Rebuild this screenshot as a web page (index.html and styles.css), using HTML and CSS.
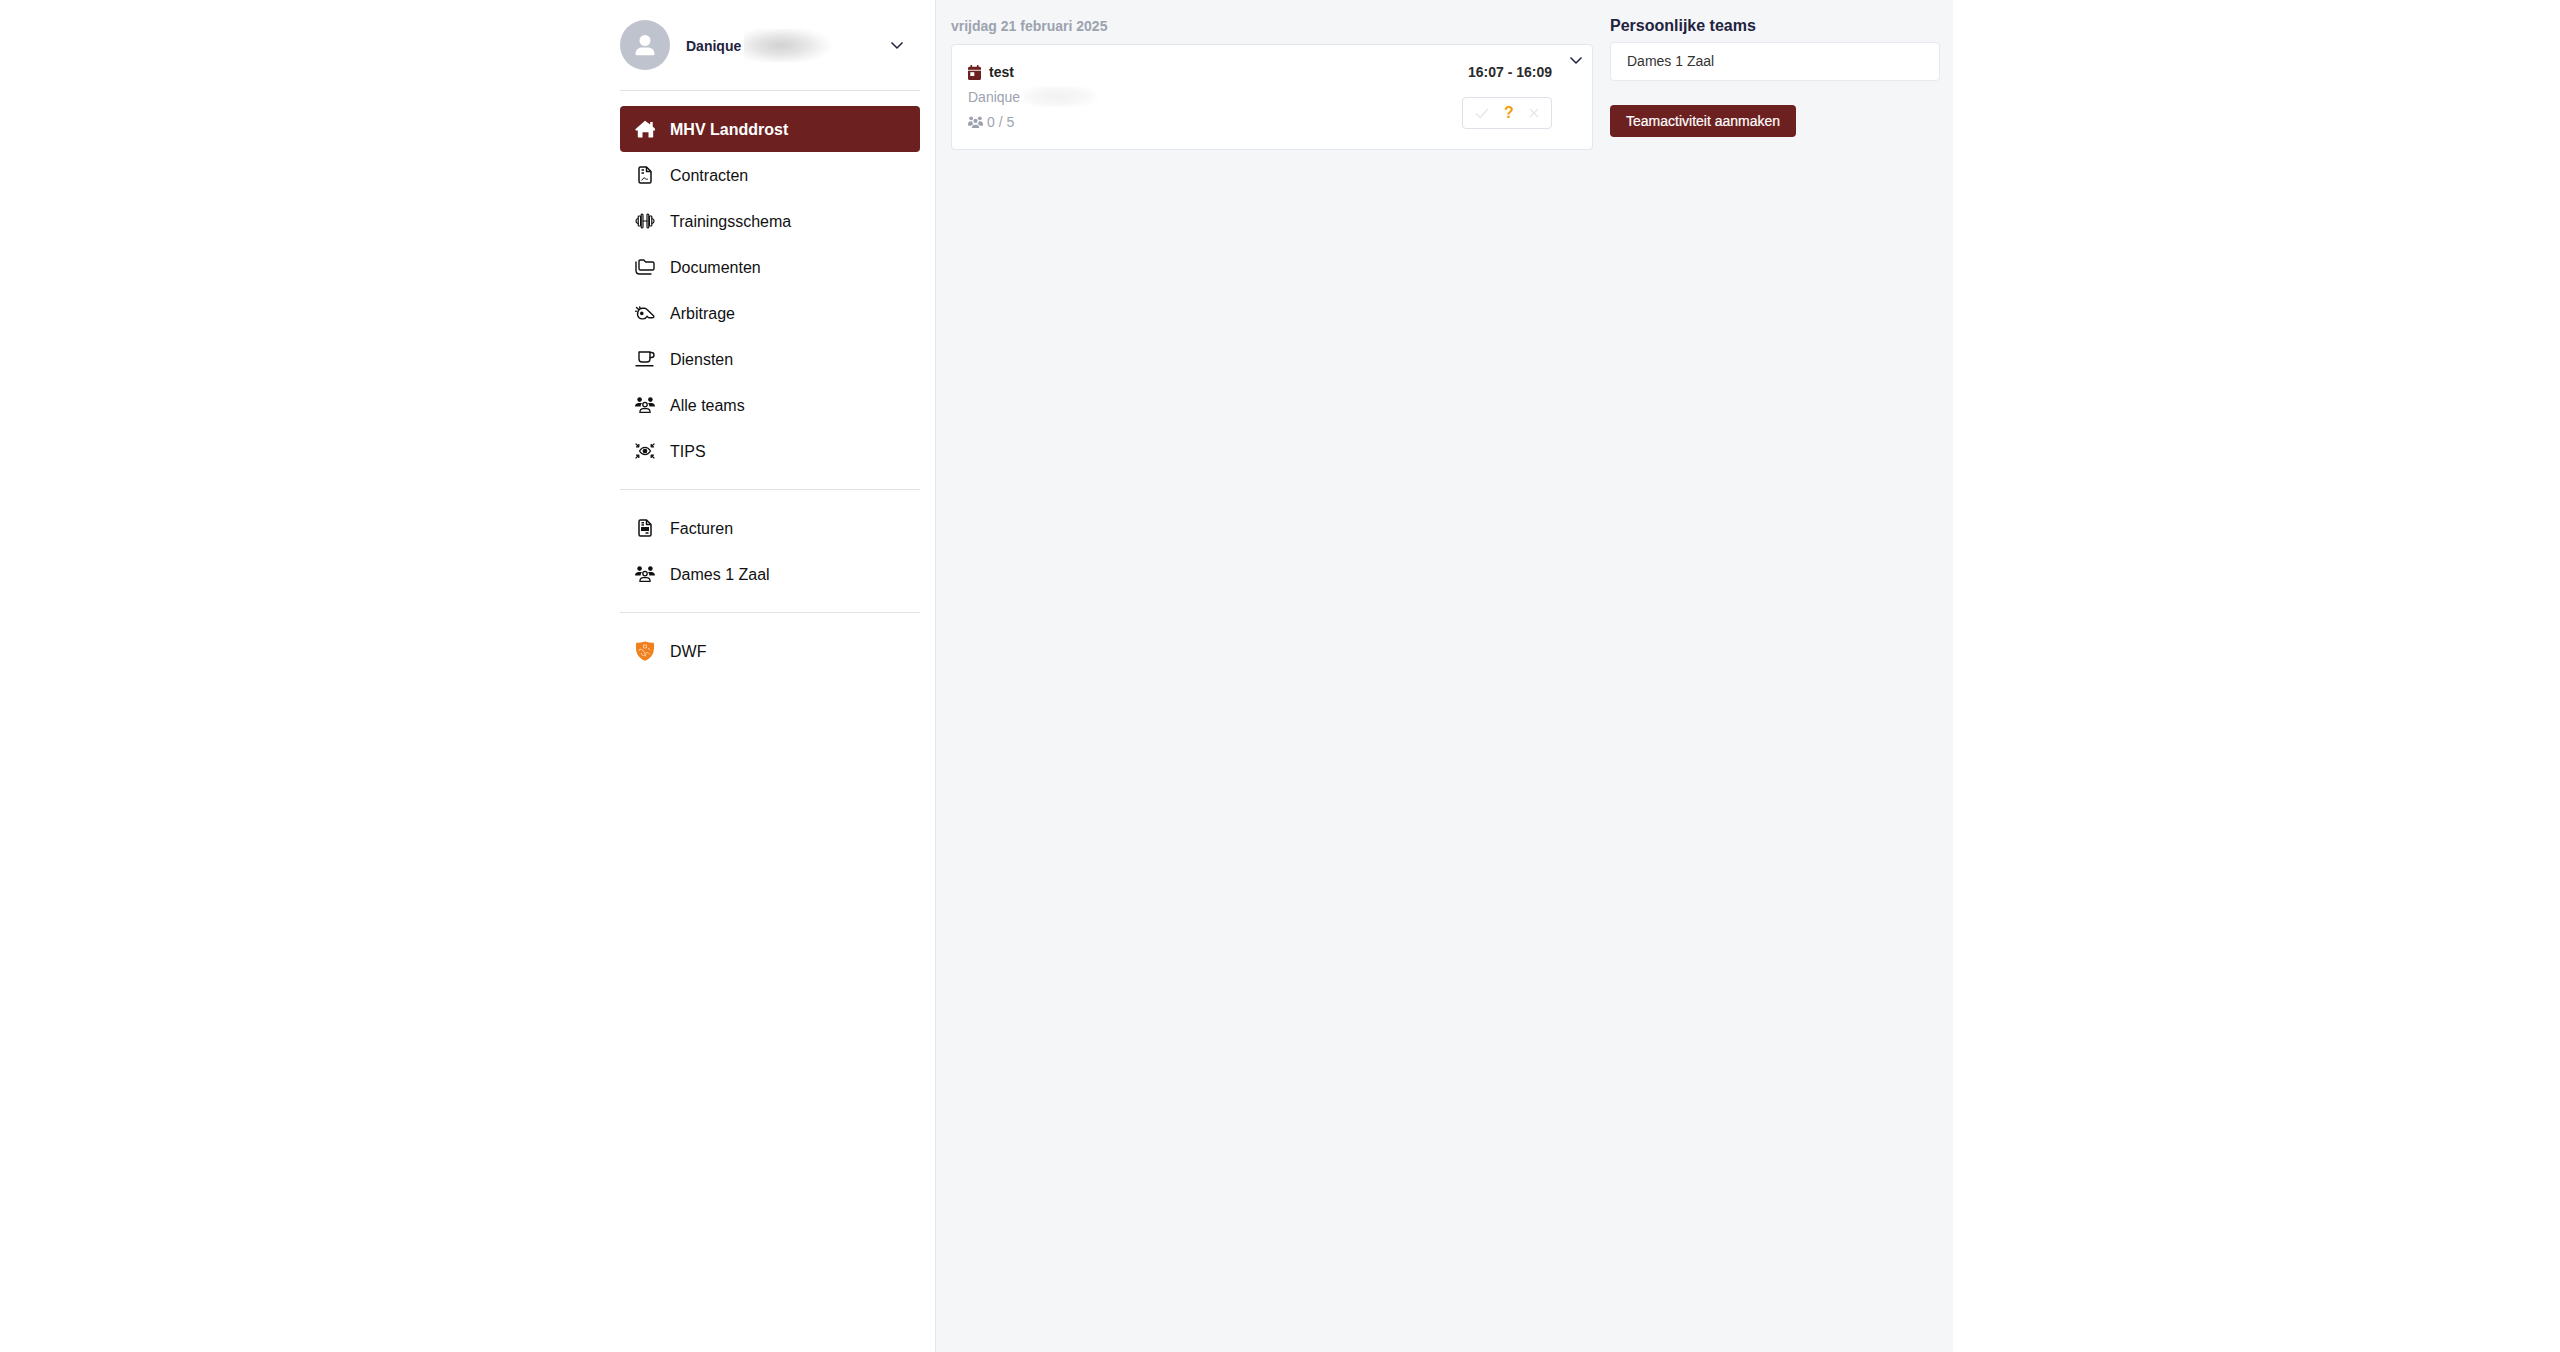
FILE: index.html
```html
<!DOCTYPE html>
<html lang="nl">
<head>
  <meta charset="UTF-8">
  <title>MHV Landdrost</title>
  <link rel="stylesheet" href="styles.css">
</head>
<body>
  <svg class="defs" width="0" height="0">
    <symbol id="icon-teams" viewBox="0 0 20 16">
      <circle cx="4.600" cy="2.600" r="2.300" fill="currentColor"/>
      <circle cx="15.400" cy="2.600" r="2.300" fill="currentColor"/>
      <path d="M0 9.600c0-2.200 1.600-3.600 3.600-3.600h2c.5 0 1 .1 1.400.3-.9.8-1.400 2-1.300 3.300H0zM20 9.600c0-2.200-1.600-3.600-3.600-3.600h-2c-.5 0-1 .1-1.400.3.9.8 1.400 2 1.300 3.300H20z" fill="currentColor"/>
      <circle cx="10" cy="7.600" r="2.200" fill="none" stroke="currentColor" stroke-width="1.300"/>
      <path d="M4.900 15.400c0-2.400 1.600-3.800 3.600-3.800h3c2 0 3.600 1.400 3.600 3.800z" fill="none" stroke="currentColor" stroke-width="1.300" stroke-linejoin="round"/>
    </symbol>
    <symbol id="icon-teams-solid" viewBox="0 0 20 16">
      <circle cx="4.200" cy="3" r="2.500"/>
      <circle cx="15.800" cy="3" r="2.500"/>
      <circle cx="10" cy="6.500" r="2.800"/>
      <path d="M0 11c0-2.400 1.500-4 3.600-4h1.800c.3 2 1 3 2 3.800C5.600 11.500 4.600 12.300 4.300 13H1c-.6 0-1-.4-1-1zM20 11c0-2.400-1.500-4-3.600-4h-1.800c-.3 2-1 3-2 3.800 1.800.7 2.800 1.500 3.100 2.200H19c.6 0 1-.4 1-1z"/>
      <path d="M5 16c0-3 2-4.500 4-4.500h2c2 0 4 1.500 4 4.500z"/>
    </symbol>
  </svg>

  <div class="page">
    <aside class="sidebar">
      <div class="user">
        <div class="avatar">
          <svg width="26" height="26" viewBox="0 0 26 26" fill="#fff">
            <circle cx="13" cy="8.500" r="5.500"/>
            <path d="M3.500 22c0-4.200 3-6.500 6.500-6.500h6c3.500 0 6.500 2.300 6.500 6.500 0 .8-.6 1.200-1.200 1.200H4.700c-.6 0-1.200-.4-1.200-1.200z"/>
          </svg>
        </div>
        <span class="user-name">Danique</span>
        <span class="blur blur-dark"></span>
        <svg class="chevron" width="14" height="9" viewBox="0 0 14 9"><path d="M1.500 1.500 7 7l5.500-5.500"/></svg>
      </div>
      <hr class="divider">

      <nav class="nav">
        <a class="nav-item active">
          <span class="nav-icon">
            <svg width="20" height="18" viewBox="0 0 20 18" fill="currentColor"><path d="M10 .8 .6 9c-.6.6-.2 1.400.5 1.400h1.700v6c0 .6.4 1 1 1h3.700v-5.100h6v5.100h3.700c.6 0 1-.4 1-1v-6h1.700c.7 0 1.100-.8.500-1.400l-2.700-2.400V2h-2.500v2.400z"/></svg>
          </span>
          <span class="nav-label">MHV Landdrost</span>
        </a>
        <a class="nav-item">
          <span class="nav-icon">
            <svg width="14" height="18" viewBox="0 0 14 18" fill="none" stroke="currentColor" stroke-width="1.500" stroke-linejoin="round"><path d="M2.500 1h6L13 5.500V15.500a1.500 1.500 0 0 1-1.500 1.500h-9A1.500 1.500 0 0 1 1 15.500v-13A1.500 1.500 0 0 1 2.500 1z"/><path d="M8.500 1v4.500H13M3.500 4h2.500M3.500 7h2.500"/><path d="M3.500 14.300c1.200-.2 1.700-2.600 2.700-2.600s1 1.600 1.900 1.600c.7 0 1-.5 1.900 0" stroke-width="1"/></svg>
          </span>
          <span class="nav-label">Contracten</span>
        </a>
        <a class="nav-item">
          <span class="nav-icon">
            <svg width="20" height="16" viewBox="0 0 20 16" fill="none" stroke="currentColor" stroke-width="1.200" stroke-linecap="round" stroke-linejoin="round"><rect x="3.200" y="3" width="2.400" height="10" rx=".8"/><rect x="14.400" y="3" width="2.400" height="10" rx=".8"/><rect x="6.200" y="1" width="1.800" height="14" rx=".9"/><rect x="12" y="1" width="1.800" height="14" rx=".9"/><path d="M8 8h4M3 5.500c-2.700.5-2.700 4.500 0 5M17 5.500c2.700.5 2.700 4.500 0 5"/></svg>
          </span>
          <span class="nav-label">Trainingsschema</span>
        </a>
        <a class="nav-item">
          <span class="nav-icon">
            <svg width="20" height="16" viewBox="0 0 20 16" fill="none" stroke="currentColor" stroke-width="1.400" stroke-linejoin="round"><path d="M4 3.500V2.200C4 1.500 4.500 1 5.200 1h3.500l2 2h6.800c.8 0 1.500.7 1.500 1.500v5c0 .8-.7 1.500-1.500 1.500H5.500C4.700 11 4 10.300 4 9.500z"/><path d="M1 3v8.500C1 13.500 2.500 15 4.500 15H16" stroke-linecap="round"/></svg>
          </span>
          <span class="nav-label">Documenten</span>
        </a>
        <a class="nav-item">
          <span class="nav-icon">
            <svg width="20" height="15" viewBox="0 0 20 15" fill="none" stroke="currentColor" stroke-width="1.400" stroke-linejoin="round" stroke-linecap="round"><path d="M7.500 2.200h2.300c1 0 1.500.5 2.200 1.300l6.500 6.300c.8.800.3 2-.8 2h-3.200c-.7 0-1.200-.2-1.600-.7l-.8-.9c-1.500 3.200-6.100 3.500-8.300 1.200C1.300 8.700 2.700 2.200 7.500 2.200z"/><circle cx="6.800" cy="7.400" r="1.100" fill="currentColor"/><path d="M3.300 3.300 1.500 1.500M1.300 5.300H.7M5 2 4.700 1"/></svg>
          </span>
          <span class="nav-label">Arbitrage</span>
        </a>
        <a class="nav-item">
          <span class="nav-icon">
            <svg width="20" height="16" viewBox="0 0 20 16" fill="none" stroke="currentColor" stroke-width="1.400" stroke-linejoin="round" stroke-linecap="round"><path d="M4 1h11v7c0 1.700-1.300 3-3 3H7c-1.700 0-3-1.300-3-3z"/><path d="M15 1.500h1.500c1.400 0 2.500 1.100 2.500 2.500s-1.100 2.500-2.500 2.500H15"/><path d="M1 14.800h17"/></svg>
          </span>
          <span class="nav-label">Diensten</span>
        </a>
        <a class="nav-item">
          <span class="nav-icon"><svg width="20" height="16"><use href="#icon-teams"/></svg></span>
          <span class="nav-label">Alle teams</span>
        </a>
        <a class="nav-item">
          <span class="nav-icon">
            <svg width="20" height="16" viewBox="0 0 20 16" fill="none" stroke="currentColor" stroke-width="1.300" stroke-linejoin="round"><path d="M4.500 8C6 5.600 8 4.400 10 4.400s4 1.200 5.500 3.600c-1.500 2.400-3.500 3.600-5.500 3.600S6 10.400 4.500 8z"/><circle cx="10" cy="8" r="1.700" fill="currentColor"/><path d="M.6.600 3.800 3.800M3.800 1v2.800H1M19.400.600l-3.200 3.200M16.200 1v2.800H19M.6 15.400l3.200-3.200M3.800 15v-2.800H1M19.400 15.400l-3.200-3.200M16.200 15v-2.800H19"/></svg>
          </span>
          <span class="nav-label">TIPS</span>
        </a>
      </nav>
      <hr class="divider">

      <nav class="nav">
        <a class="nav-item">
          <span class="nav-icon">
            <svg width="14" height="18" viewBox="0 0 14 18" fill="none" stroke="currentColor" stroke-width="1.500" stroke-linejoin="round"><path d="M2.500 1h6L13 5.500V15.500a1.500 1.500 0 0 1-1.500 1.500h-9A1.500 1.500 0 0 1 1 15.500v-13A1.500 1.500 0 0 1 2.500 1z" fill="#fff"/><path d="M8.500 1v4.500H13M3.500 3.800h2.500M3.500 6h2.500M7.500 14h3"/><rect x="3" y="8" width="8" height="4" fill="currentColor" stroke="none"/></svg>
          </span>
          <span class="nav-label">Facturen</span>
        </a>
        <a class="nav-item">
          <span class="nav-icon"><svg width="20" height="16"><use href="#icon-teams"/></svg></span>
          <span class="nav-label">Dames 1 Zaal</span>
        </a>
      </nav>
      <hr class="divider">

      <nav class="nav">
        <a class="nav-item">
          <span class="nav-icon">
            <svg width="20" height="20" viewBox="0 0 20 20"><path d="M10 .5C13 1.500 16 1.800 18.800 1.800c.5 4.200.5 8.200-1.300 11.700C16 16.500 13 18.500 10 19.700 7 18.500 4 16.500 2.500 13.500.7 10 .7 6 1.200 1.800 4 1.800 7 1.500 10 .5z" fill="#f0801e"/><path d="M8.500 4h3v3h-3zM5 8l3 1.500 2 3 3-1 2 2M13 7l2 2M6 12l2 3 2-1M10 12.500l1 3M5 8l-1 2" fill="none" stroke="#fbd3a8" stroke-width=".9"/></svg>
          </span>
          <span class="nav-label">DWF</span>
        </a>
      </nav>
    </aside>

    <main class="main">
      <section class="agenda">
        <h2 class="date">vrijdag 21 februari 2025</h2>
        <article class="card">
          <div class="card-info">
            <div class="card-title">
              <svg width="13" height="15" viewBox="0 0 13 15" fill="#6c201f"><path d="M2.500 0h1.600v1.800h4.800V0h1.600v1.800h1c.8 0 1.500.7 1.500 1.500v10.200c0 .8-.7 1.500-1.500 1.500h-10C.7 15 0 14.300 0 13.500V3.300c0-.8.700-1.500 1.500-1.500h1z"/><rect x="2.300" y="7.200" width="4" height="3.800" fill="#fff"/><rect x="0" y="4.800" width="13" height=".9" fill="#fff"/></svg>
              test
            </div>
            <div class="card-line">Danique <span class="blur blur-light"></span></div>
            <div class="card-line">
              <svg class="card-teams" width="15" height="12"><use href="#icon-teams-solid"/></svg>
              0 / 5
            </div>
          </div>
          <div class="card-side">
            <div class="card-time">16:07 - 16:09</div>
            <div class="presence">
              <svg width="14" height="11" viewBox="0 0 14 11" fill="none" stroke="#e5e7eb" stroke-width="1.400"><path d="M1 5.500 5 9.500 13 1"/></svg>
              <span class="presence-maybe">?</span>
              <svg width="10" height="10" viewBox="0 0 10 10" fill="none" stroke="#e5e7eb" stroke-width="1.400"><path d="M1 1l8 8M9 1 1 9"/></svg>
            </div>
          </div>
          <svg class="chevron card-toggle" width="14" height="9" viewBox="0 0 14 9"><path d="M1.500 1.500 7 7l5.500-5.500"/></svg>
        </article>
      </section>

      <section class="teams">
        <h2 class="teams-title">Persoonlijke teams</h2>
        <div class="team-row">Dames 1 Zaal</div>
        <button class="btn-primary">Teamactiviteit aanmaken</button>
      </section>
    </main>
  </div>
</body>
</html>
```

FILE: styles.css
```css
html, body {
  height: 100%;
}
body {
  margin: 0;
  background: #fff;
  color: #111;
  font-family: "Liberation Sans", Arial, sans-serif;
  font-size: 14px;
}
.defs {
  position: absolute;
}
.page {
  display: flex;
  width: 1346px;
  height: 100%;
  margin: 0 auto;
}

/* sidebar */
.sidebar {
  box-sizing: border-box;
  width: 329px;
  padding: 20px 15px 0 13px;
  border-right: 1px solid #e5e7eb;
}
.user {
  display: flex;
  align-items: center;
  height: 50px;
}
.avatar {
  display: flex;
  align-items: center;
  justify-content: center;
  width: 50px;
  height: 50px;
  border-radius: 50%;
  background: #bfc3cd;
}
.user-name {
  margin-left: 16px;
  padding-top: 1px;
  font-weight: bold;
  color: #1f2340;
}
.blur {
  display: inline-block;
}
.blur-dark {
  width: 92px;
  height: 33px;
  margin-left: 3px;
  background: radial-gradient(ellipse 58% 60% at 40% 50%, #d2d2d2, #e4e4e4 45%, #f6f6f6 78%, #fff 100%);
}
.blur-light {
  width: 75px;
  height: 21px;
  background: radial-gradient(ellipse 58% 62% at 45% 50%, #f1f2f1, #f6f7f6 60%, #fff 100%);
}
.chevron {
  fill: none;
  stroke: #1f2340;
  stroke-width: 1.500;
}
.user .chevron {
  margin-left: auto;
  margin-right: 16px;
}
.divider {
  height: 1px;
  margin: 15px 0;
  border: 0;
  background: #e1e2e8;
}
.user + .divider {
  margin-top: 20px;
}
.nav-item {
  display: flex;
  align-items: center;
  height: 46px;
  border-radius: 4px;
  font-size: 16px;
  color: #111;
}
.nav-item.active {
  background: #6c201f;
  color: #fff;
  font-weight: bold;
}
.nav-icon {
  display: flex;
  align-items: center;
  justify-content: center;
  width: 20px;
  margin: 0 15px;
}
.nav-label {
  padding-top: 2px;
}

/* main column */
.main {
  flex: 1;
  display: flex;
  gap: 17px;
  padding: 16px 13px 0 15px;
  background: #f5f6f8;
}
.agenda {
  width: 642px;
}
.date {
  margin: 0 0 8px;
  font-size: 14px;
  line-height: 20px;
  color: #9ca3af;
}
.card {
  position: relative;
  box-sizing: border-box;
  display: flex;
  justify-content: space-between;
  height: 106px;
  padding: 15px 40px 13px 16px;
  border: 1px solid #e3e6ec;
  border-radius: 4px;
  background: #fff;
}
.card-title {
  display: flex;
  align-items: center;
  gap: 8px;
  height: 24px;
  font-weight: bold;
  color: #222;
}
.card-line {
  display: flex;
  align-items: center;
  height: 25px;
  color: #9ca3af;
}
.card-line .blur {
  margin-left: 4px;
}
.card-teams {
  margin-right: 4px;
  fill: #9ca3af;
}
.card-side {
  display: flex;
  flex-direction: column;
  align-items: flex-end;
}
.card-time {
  height: 24px;
  line-height: 24px;
  font-weight: bold;
  color: #2b2b2b;
}
.presence {
  box-sizing: border-box;
  display: flex;
  align-items: center;
  justify-content: space-between;
  width: 90px;
  height: 32px;
  margin-top: 13px;
  padding: 0 12px;
  border: 1px solid #dfe1e8;
  border-radius: 4px;
}
.presence-maybe {
  font-size: 16px;
  font-weight: bold;
  color: #f59e0b;
}
.card-toggle {
  position: absolute;
  top: 11px;
  right: 9px;
}

/* right column */
.teams {
  width: 330px;
}
.teams-title {
  margin: 0 0 7px;
  font-size: 16px;
  line-height: 19px;
  color: #1f2340;
}
.team-row {
  box-sizing: border-box;
  height: 39px;
  padding: 0 16px;
  border: 1px solid #e7e9ef;
  border-radius: 4px;
  background: #fff;
  line-height: 37px;
  color: #333;
}
.btn-primary {
  display: block;
  height: 32px;
  margin-top: 24px;
  padding: 0 16px;
  border: 0;
  border-radius: 4px;
  background: #6c201f;
  color: #fff;
  font: 14px "Liberation Sans", Arial, sans-serif;
  -webkit-text-stroke: 0.2px #fff;
}
```
